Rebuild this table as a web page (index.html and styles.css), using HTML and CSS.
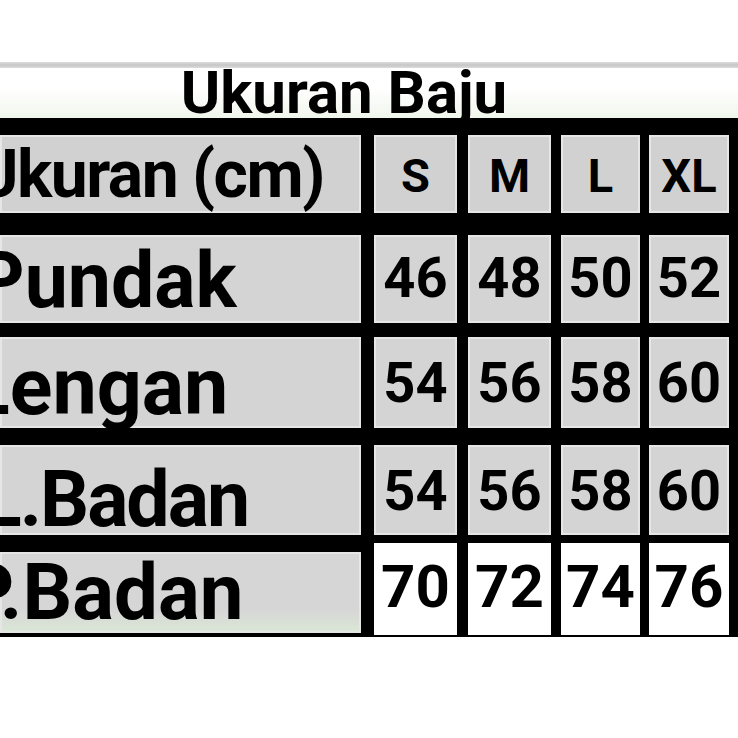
FILE: index.html
```html
<!DOCTYPE html>
<html lang="id">
<head>
<meta charset="utf-8">
<title>Ukuran Baju</title>
<link rel="stylesheet" href="styles.css">
</head>
<body>
<div class="page">
  <div class="top-space"></div>
  <div class="rule"></div>
  <h1 class="title">Ukuran Baju</h1>
  <div class="chart">
    <div class="row row-head">
      <div class="label">Ukuran (cm)</div>
      <div class="bar"></div><div class="cell">S</div>
      <div class="bar"></div><div class="cell">M</div>
      <div class="bar bar-low"></div><div class="cell">L</div>
      <div class="bar bar-low"></div><div class="cell">XL</div>
    </div>
    <div class="row row-pundak">
      <div class="label">Pundak</div>
      <div class="bar"></div><div class="cell">46</div>
      <div class="bar"></div><div class="cell">48</div>
      <div class="bar"></div><div class="cell">50</div>
      <div class="bar"></div><div class="cell">52</div>
    </div>
    <div class="row row-lengan">
      <div class="label">Lengan</div>
      <div class="bar"></div><div class="cell">54</div>
      <div class="bar"></div><div class="cell">56</div>
      <div class="bar"></div><div class="cell">58</div>
      <div class="bar"></div><div class="cell">60</div>
    </div>
    <div class="row row-lbadan">
      <div class="label">L.Badan</div>
      <div class="bar"></div><div class="cell">54</div>
      <div class="bar"></div><div class="cell">56</div>
      <div class="bar"></div><div class="cell">58</div>
      <div class="bar"></div><div class="cell">60</div>
    </div>
    <div class="row row-pbadan">
      <div class="label">P.Badan</div>
      <div class="bar bar-a"></div><div class="cell">70</div>
      <div class="bar bar-b"></div><div class="cell">72</div>
      <div class="bar bar-c"></div><div class="cell">74</div>
      <div class="bar bar-c"></div><div class="cell">76</div>
    </div>
  </div>
</div>
</body>
</html>
```
FILE: styles.css
```css
html, body {
  margin: 0;
  padding: 0;
  background: #ffffff;
}

.page {
  width: 738px;
  font-family: Roboto, "Liberation Sans", Arial, sans-serif;
  font-weight: 700;
  color: #000;
}

.top-space {
  height: 62px;
}

.rule {
  height: 6px;
  background: linear-gradient(#dcdcdc, #c6c6c6 50%, #dcdcdc);
}

.title {
  margin: 0;
  height: 50px;
  line-height: 50px;
  font-size: 60px;
  font-weight: 700;
  text-align: center;
  padding-right: 50px;
  background: linear-gradient(#ffffff 40%, #f1f6ec);
}

.chart {
  background: #000;
  padding: 17px 9px 2px 0;
}

.row {
  display: grid;
  grid-template-columns: 364px 10px 83px 11px 83px 10px 79px 9px 80px;
}

.label {
  overflow: hidden;
  white-space: nowrap;
  background: #d4d4d4;
  box-shadow: inset 0 0 0 2px #e6e6e6;
  margin-right: 3px;
  line-height: 1;
  font-size: 77px;
}

.cell {
  background: #d4d4d4;
  box-shadow: inset 0 0 0 2px #e6e6e6;
  text-align: center;
  line-height: 1;
  font-size: 56px;
}

.bar {
  background: #000;
}

/* header */
.row-head {
  height: 78px;
  margin-bottom: 22px;
}
.row-head .label {
  font-size: 66px;
  letter-spacing: -1.5px;
  padding-top: 7px;
  text-indent: -25px;
  background: #d1d1d1;
}
.row-head .cell {
  font-size: 47px;
  padding-top: 17px;
  background: #d1d1d1;
}

/* Pundak */
.row-pundak {
  height: 88px;
  margin-bottom: 14px;
}
.row-pundak .label {
  padding-top: 8px;
  text-indent: -25px;
}
.row-pundak .cell {
  padding-top: 15px;
}
.row-pundak .bar {
  margin-top: 4px;
}

/* Lengan */
.row-lengan {
  height: 91px;
  margin-bottom: 17px;
}
.row-lengan .label {
  padding-top: 11px;
  text-indent: -33px;
  font-size: 79px;
}
.row-lengan .cell {
  padding-top: 18px;
}
.row-lengan .bar {
  margin-top: 6px;
}

/* L.Badan */
.row-lbadan {
  height: 90px;
  margin-bottom: 8px;
}
.row-lbadan .label {
  padding-top: 17px;
  text-indent: -20px;
  font-size: 77px;
  letter-spacing: -2px;
}
.row-lbadan .cell {
  padding-top: 18px;
}
.row-lbadan .bar {
  margin-top: 4px;
}

/* P.Badan */
.row-pbadan {
  height: 92px;
}
.row-pbadan .label {
  margin-top: 9px;
  margin-bottom: 2px;
  padding-top: 2px;
  text-indent: -36px;
  font-size: 78px;
  background: linear-gradient(#d6d6d6 70%, #dbe8d6);
}
.row-pbadan .cell {
  background: #ffffff;
  box-shadow: none;
  padding-top: 14px;
  font-size: 60px;
}
.row-pbadan .bar-a {
  margin-top: 14px;
}
.row-pbadan .bar-c {
  margin-top: 9px;
  margin-bottom: 10px;
}
```
